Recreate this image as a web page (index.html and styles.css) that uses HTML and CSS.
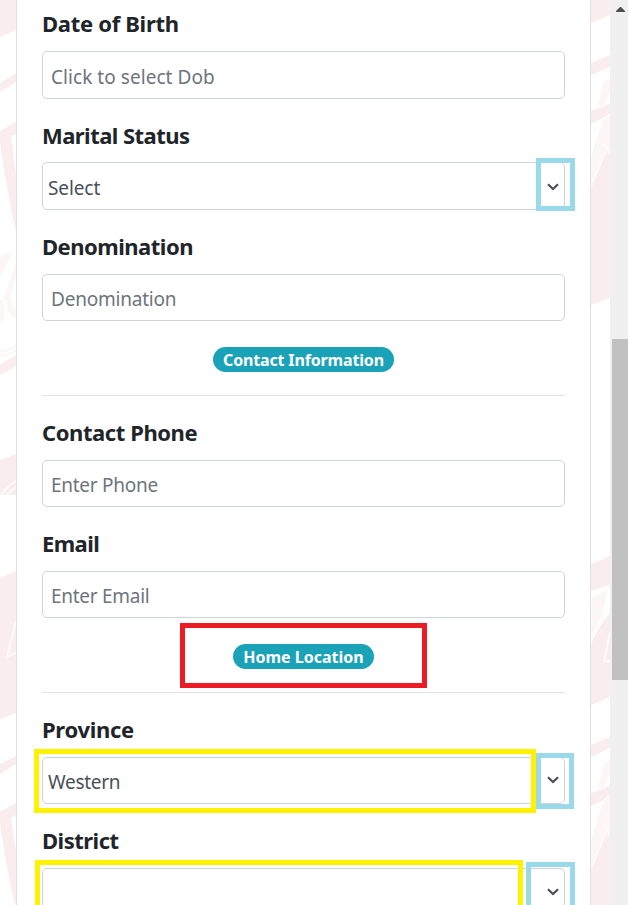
FILE: index.html
```html
<!DOCTYPE html>
<html lang="en">
<head>
<meta charset="utf-8">
<title>Registration</title>
<link rel="stylesheet" href="styles.css">
</head>
<body>
<div class="page">
  <svg class="strip strip-left" viewBox="0 0 16 905" aria-hidden="true">
    <g id="left-art">
      <path class="pink" d="M0 0H16V30L0 37zM0 83L16 73V82L0 92zM0 131L16 122V134L11 136L16 175V232Q7 192 0 142z"/>
      <path class="faint" d="M0 256Q9 250 11 256L0 276zM3 300L16 262V276L9 300zM0 300H3L5 319L0 322zM7 300Q7 318 16 318V309Q12 309 12 300z"/>
      <path class="faint-line" d="M0 351Q10 352 16 345M0 356Q10 355 16 350"/>
      <path class="pink" d="M0 365Q9 359 16 355V366L0 375zM0 460L16 454V495H0z"/>
      <path class="white-line" d="M1 495Q8 486 16 481M7 495Q11 490 16 487"/>
    </g>
    <path class="pink" d="M0 578L16 571V713L0 719zM0 764L16 756V764L0 774zM0 812L16 803V815L11 818L16 851V905H15Q7 873 0 823z"/>
    <path class="white-line" d="M16 621L7 657L16 653"/>
  </svg>
  <main class="card">
    <div class="field"><label class="w1" for="dob">Date of Birth</label><input class="p1" id="dob" placeholder="Click to select Dob"></div>
    <div class="field marital"><label class="w2">Marital Status</label>
      <div class="select"><span class="s1">Select</span><svg class="chevron" viewBox="0 0 12 8"><path d="M1 1.2L6 6L11 1.2"/></svg></div></div>
    <div class="field"><label class="w3" for="den">Denomination</label><input class="p2" id="den" placeholder="Denomination"></div>
    <div class="section contact"><span class="badge b1">Contact Information</span></div>
    <div class="field"><label class="w4" for="phone">Contact Phone</label><input class="p3" id="phone" placeholder="Enter Phone"></div>
    <div class="field"><label class="w5" for="email">Email</label><input class="p4" id="email" placeholder="Enter Email"></div>
    <div class="section home"><span class="badge b2">Home Location</span></div>
    <div class="field"><label class="w6">Province</label>
      <div class="select"><span class="s2">Western</span><svg class="chevron" viewBox="0 0 12 8"><path d="M1 1.2L6 6L11 1.2"/></svg></div></div>
    <div class="field"><label class="w7">District</label>
      <div class="select"><span></span><svg class="chevron" viewBox="0 0 12 8"><path d="M1 1.2L6 6L11 1.2"/></svg></div></div>
  </main>
  <svg class="strip strip-right" viewBox="0 0 19 905" aria-hidden="true">
    <path class="pink" d="M0 0H19V15L0 23zM0 63L19 55V67L0 75zM0 111L12 107L19 103V113L12 118L0 124z"/>
    <path class="faint" d="M7 105L13 82L19 78V92L12 107zM0 157L12 120L19 114V155H15L0 188z"/>
    <path class="pink" d="M0 188L15 153L19 155V298L0 305z"/>
    <path class="white-line" d="M0 186L14 153M13 144L19 152"/>
    <path class="pink" d="M0 564L19 556V585L0 591z"/>
    <path class="faint" d="M1 598L17 589L12 612L0 636z"/>
    <path class="pink" d="M0 644Q8 625 19 613V697L0 705zM0 745L19 737V748L0 757zM0 793L12 789L19 785V795L12 800L0 806z"/>
    <path class="white-line" d="M19 632L13 662L19 661M0 639Q7 620 19 607"/>
    <path class="faint" d="M7 787L13 764L19 760V774L12 789zM0 839L12 802L19 796V837H15L0 870z"/>
    <path class="pink" d="M0 870L15 835L19 837V905H0z"/>
    <path class="white-line" d="M0 868L14 835M13 826L19 834"/>
  </svg>
  <aside class="scrollbar">
    <svg class="arrow" viewBox="0 0 9 5"><path d="M4 0h1l4 4v1H0V4z"/></svg>
    <div class="thumb"></div>
  </aside>
  <i class="mark blue marital-arrow"></i>
  <i class="mark red home-box"></i>
  <i class="mark yellow province-box"></i>
  <i class="mark blue province-arrow"></i>
  <i class="mark yellow district-box"></i>
  <i class="mark blue district-arrow"></i>
</div>
</body>
</html>
```
FILE: styles.css
```css
* { box-sizing: border-box; }
body { margin: 0; background: #fff; font-family: "Noto Sans", sans-serif; }
.page { position: relative; display: flex; width: 628px; height: 905px; overflow: hidden; }
.strip { display: block; flex: none; height: 905px; }
.strip-left { width: 16px; }
.strip-right { width: 19px; }
.pink { fill: #f9eded; }
.faint { fill: #fcf6f6; }
.faint-line { fill: none; stroke: #fbf3f3; stroke-width: 1.5; }
.white-line { fill: none; stroke: #fffafa; stroke-width: 2; }
.card { flex: none; width: 575px; height: 1000px; padding: 7px 25px 0; background: #fff; border: solid #dfdfdf; border-width: 0 1px; }
.field { height: 111.33px; }
label { display: block; height: 44px; line-height: 32px; font-size: 22px; font-weight: 700; color: #212529; white-space: nowrap; }
input, .select { display: block; width: 523px; height: 47px; border: 1px solid #ced4da; border-radius: 5px; background: #fff; font-family: inherit; font-size: 19px; color: #495057; }
input { padding: 3px 8px 0; outline: 0; }
input::placeholder { color: #6c757d; opacity: 1; }
#dob { height: 48px; }
.select { display: flex; align-items: center; justify-content: space-between; padding: 3px 5px 0; }
.marital label { line-height: 34px; }
.marital .select { height: 47.5px; padding-top: 4px; }
.w1 { letter-spacing: -0.3px; }
.w2 { letter-spacing: -0.55px; }
.w3 { letter-spacing: -0.5px; }
.w4 { letter-spacing: -0.42px; }
.w5 { letter-spacing: -0.6px; }
.w6 { letter-spacing: -0.3px; }
.w7 { letter-spacing: -0.5px; }
.p1 { letter-spacing: 0.05px; }
.p2 { letter-spacing: -0.22px; }
.p3, .p4 { letter-spacing: -0.27px; }
.s1 { letter-spacing: -0.1px; }
.s2 { letter-spacing: -0.3px; }
.chevron { width: 12px; height: 8px; margin: -3px 0 0; fill: none; stroke: #495057; stroke-width: 2.2; }
.section { border-bottom: 1px solid #e3e3e3; text-align: center; margin-bottom: 20px; }
.contact { height: 55px; padding-top: 6px; }
.home { height: 54.34px; padding-top: 5.34px; }
.badge { display: flex; align-items: center; justify-content: center; height: 25px; margin: 0 auto; padding-top: 1px; border-radius: 13px; background: #19a2b8; color: #fff; font-size: 16px; font-weight: 700; white-space: nowrap; }
.b1 { width: 181px; letter-spacing: -0.16px; }
.b2 { width: 141px; }
.scrollbar { flex: none; width: 18px; padding: 7px 0 0 2px; background: #f0f0f0; }
.arrow { display: block; width: 9px; height: 5px; margin: 0 0 327px 4px; fill: #505050; }
.thumb { height: 341px; background: #c1c1c1; }
.mark { position: absolute; border: 5px solid; }
.blue { border-color: #99d9ea; }
.red { border-color: #ed1c24; }
.yellow { border-color: #fff200; }
.marital-arrow { left: 536px; top: 158px; width: 39px; height: 53px; }
.home-box { left: 180px; top: 623px; width: 247px; height: 65px; }
.province-box { left: 34px; top: 749px; width: 502px; height: 64px; }
.province-arrow { left: 536px; top: 753px; width: 38px; height: 56px; }
.district-box { left: 35px; top: 860px; width: 488px; height: 60px; }
.district-arrow { left: 526px; top: 862px; width: 49px; height: 60px; }
```
